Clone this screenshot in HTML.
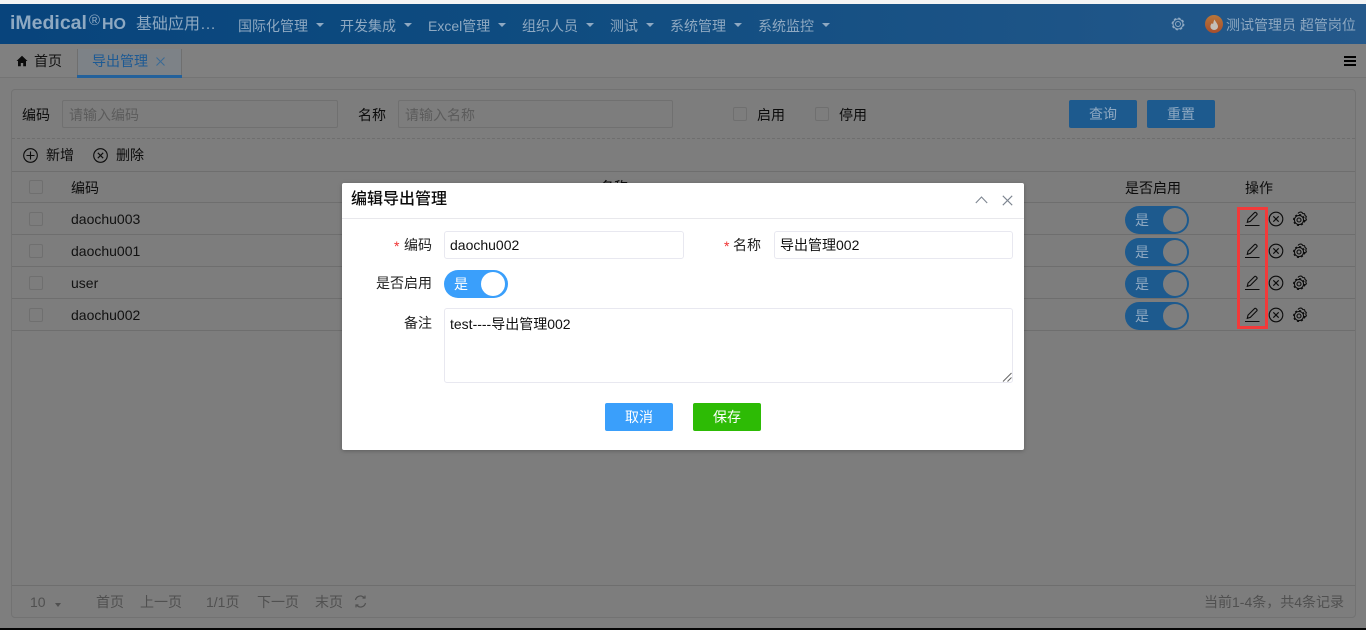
<!DOCTYPE html>
<html><head><meta charset="utf-8">
<style>
*{box-sizing:border-box}
html,body{margin:0;padding:0;width:1366px;height:630px;overflow:hidden;background:#7e7e7e;font-family:"Liberation Sans","Noto Sans CJK SC",sans-serif;font-size:14px;color:#0c0c0c}
.a{position:absolute;white-space:nowrap;line-height:20px}
.box{position:absolute}
.menu{position:absolute;top:16px;line-height:20px;color:#8fa9c2;white-space:nowrap}
.car{position:absolute;top:23px;width:0;height:0;border-left:4.5px solid transparent;border-right:4.5px solid transparent;border-top:4.5px solid #8fa9c2}
.hl{position:absolute;left:12px;width:1343px;height:1px;background:#6e6e6e}
.cb{position:absolute;width:14px;height:14px;border:1px solid #6f6f6f;border-radius:2px}
.tg{position:absolute;left:1125px;width:64px;height:28px;border-radius:14px;background:#1d5a8e}
.tg i{position:absolute;right:2px;top:2px;width:24px;height:24px;border-radius:50%;background:#7e7e7e}
.tg span{position:absolute;left:10px;top:4px;line-height:20px;color:#8fa9c2;font-style:normal}
.inp{position:absolute;border:1px solid #e8e8f0;border-radius:3px;background:#fff;line-height:26px;padding-left:5px;color:#111}
.pb{position:absolute;top:592px;line-height:20px;color:#505050;white-space:nowrap}
svg{position:absolute;overflow:visible}
</style></head><body>
<div class="box" style="left:0;top:0;width:1366px;height:4px;background:#f4f4f4"></div>
<div class="box" style="left:0;top:4px;width:1366px;height:40px;background:linear-gradient(90deg,#08447c 0%,#0f4c80 40%,#25598b 100%)"></div>
<div class="a" style="left:10px;top:12px;font-size:19.5px;font-weight:bold;color:#8ea9c2;line-height:22px">iMedical</div>
<div class="a" style="left:89px;top:11px;font-size:15px;color:#8ea9c2">®</div>
<div class="a" style="left:102px;top:14px;font-size:16px;font-weight:bold;color:#8ea9c2;line-height:22px">HO</div>
<div class="a" style="left:136px;top:15px;font-size:16px;color:#8ea9c2">基础应用…</div>
<div class="menu" style="left:238px">国际化管理</div><div class="car" style="left:316px"></div>
<div class="menu" style="left:340px">开发集成</div><div class="car" style="left:404px"></div>
<div class="menu" style="left:428px">Excel管理</div><div class="car" style="left:498px"></div>
<div class="menu" style="left:522px">组织人员</div><div class="car" style="left:586px"></div>
<div class="menu" style="left:610px">测试</div><div class="car" style="left:646px"></div>
<div class="menu" style="left:670px">系统管理</div><div class="car" style="left:734px"></div>
<div class="menu" style="left:758px">系统监控</div><div class="car" style="left:822px"></div>
<svg style="left:1171px;top:17px" width="14" height="14" viewBox="0 0 14 14" fill="none" stroke="#8fa9c2"><circle cx="7" cy="7" r="5" stroke-width="1"/><circle cx="7" cy="7" r="5.800" stroke-width="1.200" stroke-dasharray="2.300 2.250"/><circle cx="7" cy="7" r="2.500" stroke-width="1"/></svg>
<div class="box" style="left:1205px;top:15px;width:18px;height:18px;border-radius:50%;background:linear-gradient(180deg,#b8763a,#a84e2c)"></div>
<svg style="left:1208px;top:18px" width="12" height="13" viewBox="0 0 12 13"><path d="M6.500 1.500C7.500 4 10 6 10 8.500A3.800 3.500 0 0 1 2.400 8.500C2.400 6.800 3.300 6 4 5 4.400 5.700 4.800 6 5.100 6 5.300 4.500 5.700 3 6.500 1.500z" fill="#c4bfb8"/></svg>
<div class="menu" style="left:1226px;top:15px">测试管理员 超管岗位</div>

<div class="box" style="left:0;top:44px;width:1366px;height:34px;background:#808080;border-bottom:1px solid #747474"></div>
<svg style="left:16px;top:55px" width="12" height="12" viewBox="0 0 12 12"><path d="M6 .8 11.500 6H10v5.200H7.200V8H4.800v3.200H2V6H.5z" fill="#0b0b0b"/></svg>
<div class="a" style="left:34px;top:51px;color:#111">首页</div>
<div class="box" style="left:77px;top:49px;width:105px;height:26px;border-left:1px solid #6f6f6f;border-right:1px solid #6f6f6f;background:#7d8287"></div>
<div class="box" style="left:77px;top:75px;width:105px;height:3px;background:#23619b"></div>
<div class="a" style="left:92px;top:51px;color:#1d5a94">导出管理</div>
<svg style="left:156px;top:57px" width="9" height="9" viewBox="0 0 9 9" stroke="#3a6a96" stroke-width="1"><path d="M.5.5l8 8M8.500.5l-8 8"/></svg>
<div class="box" style="left:1344px;top:56px;width:12px;height:2px;background:#000"></div>
<div class="box" style="left:1344px;top:60px;width:12px;height:2px;background:#000"></div>
<div class="box" style="left:1344px;top:64px;width:12px;height:2px;background:#000"></div>

<div class="box" style="left:11px;top:89px;width:1345px;height:529px;border:1px solid #727272;border-radius:4px;background:#7d7d7d"></div>

<div class="a" style="left:22px;top:105px">编码</div>
<div class="box" style="left:62px;top:100px;width:276px;height:28px;border:1px solid #707070;border-radius:2px"></div>
<div class="a" style="left:69px;top:105px;color:#5c5c5c">请输入编码</div>
<div class="a" style="left:358px;top:105px">名称</div>
<div class="box" style="left:398px;top:100px;width:275px;height:28px;border:1px solid #707070;border-radius:2px"></div>
<div class="a" style="left:405px;top:105px;color:#5c5c5c">请输入名称</div>
<div class="cb" style="left:733px;top:107px"></div><div class="a" style="left:757px;top:105px">启用</div>
<div class="cb" style="left:815px;top:107px"></div><div class="a" style="left:839px;top:105px">停用</div>
<div class="box" style="left:1069px;top:100px;width:68px;height:28px;background:#1d5a8e;border-radius:2px;text-align:center;line-height:29px;color:#8fa9c2">查询</div>
<div class="box" style="left:1147px;top:100px;width:68px;height:28px;background:#1d5a8e;border-radius:2px;text-align:center;line-height:29px;color:#8fa9c2">重置</div>
<div class="box" style="left:12px;top:138px;width:1343px;height:0;border-top:1px dashed #6e6e6e"></div>

<svg style="left:23px;top:148px" width="15" height="15" viewBox="0 0 15 15" fill="none" stroke="#0c0c0c" stroke-width="1.100"><circle cx="7.500" cy="7.500" r="6.800"/><path d="M3.500 7.500h8M7.500 3.500v8"/></svg>
<div class="a" style="left:46px;top:145px">新增</div>
<svg style="left:93px;top:148px" width="15" height="15" viewBox="0 0 15 15" fill="none" stroke="#0c0c0c" stroke-width="1.100"><circle cx="7.500" cy="7.500" r="6.800"/><path d="M4.800 4.800l5.400 5.400M10.200 4.800l-5.400 5.400"/></svg>
<div class="a" style="left:116px;top:145px">删除</div>

<div class="hl" style="top:171px"></div>
<div class="hl" style="top:202px"></div>
<div class="hl" style="top:234px"></div>
<div class="hl" style="top:266px"></div>
<div class="hl" style="top:298px"></div>
<div class="hl" style="top:330px"></div>
<div class="hl" style="top:585px"></div>

<div class="cb" style="left:29px;top:180px"></div><div class="a" style="left:71px;top:178px">编码</div>
<div class="a" style="left:600px;top:177px">名称</div>
<div class="a" style="left:1125px;top:178px">是否启用</div>
<div class="a" style="left:1245px;top:178px">操作</div>

<div class="cb" style="left:29px;top:212px"></div><div class="a" style="left:71px;top:209px;color:#111">daochu003</div>
<div class="cb" style="left:29px;top:244px"></div><div class="a" style="left:71px;top:241px;color:#111">daochu001</div>
<div class="cb" style="left:29px;top:276px"></div><div class="a" style="left:71px;top:273px;color:#111">user</div>
<div class="cb" style="left:29px;top:308px"></div><div class="a" style="left:71px;top:305px;color:#111">daochu002</div>

<div class="tg" style="top:206px"><span>是</span><i></i></div>
<div class="tg" style="top:238px"><span>是</span><i></i></div>
<div class="tg" style="top:270px"><span>是</span><i></i></div>
<div class="tg" style="top:302px"><span>是</span><i></i></div>

<svg style="left:0;top:0" width="1366" height="630" fill="none">
<g stroke="#0c0c0c" stroke-width="1.100">
<g><path d="M1245 225.500h14.500M1247.300 222.300l.7-3.200 6.500-6.500a1 1 0 0 1 1.500 0l.8.8a1 1 0 0 1 0 1.500l-6.500 6.500z"/><circle cx="1276" cy="219" r="6.800"/><path d="M1273.300 216.300l5.400 5.400M1278.700 216.300l-5.400 5.400"/><circle cx="1299" cy="220" r="4.600"/><circle cx="1299" cy="220" r="5.400" stroke-width="1.200" stroke-dasharray="2 2.240"/><circle cx="1299" cy="220" r="2"/><path d="M1298 213.500c1-1.500 3-1.800 4-1l.8 1 1.700.2.600 1.800 1.200 1-.5 1.700.6 1.600-1.400 1.200-.8 1.400"/></g>
<g transform="translate(0 32)"><path d="M1245 225.500h14.500M1247.300 222.300l.7-3.200 6.500-6.500a1 1 0 0 1 1.500 0l.8.8a1 1 0 0 1 0 1.500l-6.500 6.500z"/><circle cx="1276" cy="219" r="6.800"/><path d="M1273.300 216.300l5.400 5.400M1278.700 216.300l-5.400 5.400"/><circle cx="1299" cy="220" r="4.600"/><circle cx="1299" cy="220" r="5.400" stroke-width="1.200" stroke-dasharray="2 2.240"/><circle cx="1299" cy="220" r="2"/><path d="M1298 213.500c1-1.500 3-1.800 4-1l.8 1 1.700.2.600 1.800 1.200 1-.5 1.700.6 1.600-1.400 1.200-.8 1.400"/></g>
<g transform="translate(0 64)"><path d="M1245 225.500h14.500M1247.300 222.300l.7-3.200 6.500-6.500a1 1 0 0 1 1.500 0l.8.8a1 1 0 0 1 0 1.500l-6.500 6.500z"/><circle cx="1276" cy="219" r="6.800"/><path d="M1273.300 216.300l5.400 5.400M1278.700 216.300l-5.400 5.400"/><circle cx="1299" cy="220" r="4.600"/><circle cx="1299" cy="220" r="5.400" stroke-width="1.200" stroke-dasharray="2 2.240"/><circle cx="1299" cy="220" r="2"/><path d="M1298 213.500c1-1.500 3-1.800 4-1l.8 1 1.700.2.600 1.800 1.200 1-.5 1.700.6 1.600-1.400 1.200-.8 1.400"/></g>
<g transform="translate(0 96)"><path d="M1245 225.500h14.500M1247.300 222.300l.7-3.200 6.500-6.500a1 1 0 0 1 1.500 0l.8.8a1 1 0 0 1 0 1.500l-6.500 6.500z"/><circle cx="1276" cy="219" r="6.800"/><path d="M1273.300 216.300l5.400 5.400M1278.700 216.300l-5.400 5.400"/><circle cx="1299" cy="220" r="4.600"/><circle cx="1299" cy="220" r="5.400" stroke-width="1.200" stroke-dasharray="2 2.240"/><circle cx="1299" cy="220" r="2"/><path d="M1298 213.500c1-1.500 3-1.800 4-1l.8 1 1.700.2.600 1.800 1.200 1-.5 1.700.6 1.600-1.400 1.200-.8 1.400"/></g>
</g>
</svg>
<div class="box" style="left:1237px;top:207px;width:31px;height:122px;border:3px solid #f23a3a"></div>

<div class="pb" style="left:30px">10</div>
<div class="box" style="left:55px;top:603px;width:0;height:0;border-left:3.500px solid transparent;border-right:3.500px solid transparent;border-top:4px solid #505050"></div>
<div class="pb" style="left:96px">首页</div>
<div class="pb" style="left:140px">上一页</div>
<div class="pb" style="left:206px">1/1页</div>
<div class="pb" style="left:257px">下一页</div>
<div class="pb" style="left:315px">末页</div>
<svg style="left:354px;top:595px" width="13" height="13" viewBox="0 0 13 13" fill="none" stroke="#505050" stroke-width="1.200"><path d="M1.500 5A5 5 0 0 1 10 2.500M11.500 8A5 5 0 0 1 3 10.500"/><path d="M8.500 3h2.500V.6M4.500 10H2v2.400"/></svg>
<div class="pb" style="left:1204px">当前1-4条，共4条记录</div>

<div class="box" style="left:0;top:628px;width:1366px;height:2px;background:#050505"></div>

<!-- modal -->
<div class="box" style="left:342px;top:183px;width:682px;height:267px;background:#fff;border-radius:2px;box-shadow:0 1px 4px rgba(0,0,0,.25)"></div>
<div class="a" style="left:351px;top:190px;font-size:16px;color:#0a0a0a;font-weight:500">编辑导出管理</div>
<svg style="left:975px;top:195px" width="13" height="9" viewBox="0 0 13 9" fill="none" stroke="#7d8590" stroke-width="1.100"><path d="M.8 8 6.500 2l5.700 6"/></svg>
<svg style="left:1002px;top:195px" width="11" height="11" viewBox="0 0 11 11" fill="none" stroke="#7d8590" stroke-width="1.100"><path d="M.8.800l9.400 9.400M10.200.800.800 10.200"/></svg>
<div class="box" style="left:342px;top:218px;width:682px;height:1px;background:#e8e8ec"></div>

<div class="a" style="left:394px;top:236px;color:#f03030">*</div>
<div class="a" style="left:404px;top:235px;color:#222">编码</div>
<div class="inp" style="left:444px;top:231px;width:240px;height:28px">daochu002</div>
<div class="a" style="left:724px;top:236px;color:#f03030">*</div>
<div class="a" style="left:733px;top:235px;color:#222">名称</div>
<div class="inp" style="left:774px;top:231px;width:239px;height:28px">导出管理002</div>
<div class="a" style="left:376px;top:273px;color:#222">是否启用</div>
<div class="box" style="left:444px;top:270px;width:64px;height:28px;border-radius:14px;background:#3a9ffb"></div>
<div class="box" style="left:481px;top:272px;width:24px;height:24px;border-radius:50%;background:#fff"></div>
<div class="a" style="left:454px;top:274px;color:#fff">是</div>
<div class="a" style="left:404px;top:313px;color:#222">备注</div>
<div class="inp" style="left:444px;top:308px;width:569px;height:75px;padding-top:2px">test----导出管理002</div>
<svg style="left:1002px;top:372px" width="10" height="10" viewBox="0 0 10 10" fill="none" stroke="#666" stroke-width="1"><path d="M1 9.500 9.500 1M5.500 9.500l4-4"/></svg>
<div class="box" style="left:605px;top:403px;width:68px;height:28px;background:#3a9ffb;border-radius:2px;color:#fff;text-align:center;line-height:28px">取消</div>
<div class="box" style="left:693px;top:403px;width:68px;height:28px;background:#2dbb05;border-radius:2px;color:#fff;text-align:center;line-height:28px">保存</div>
</body></html>
